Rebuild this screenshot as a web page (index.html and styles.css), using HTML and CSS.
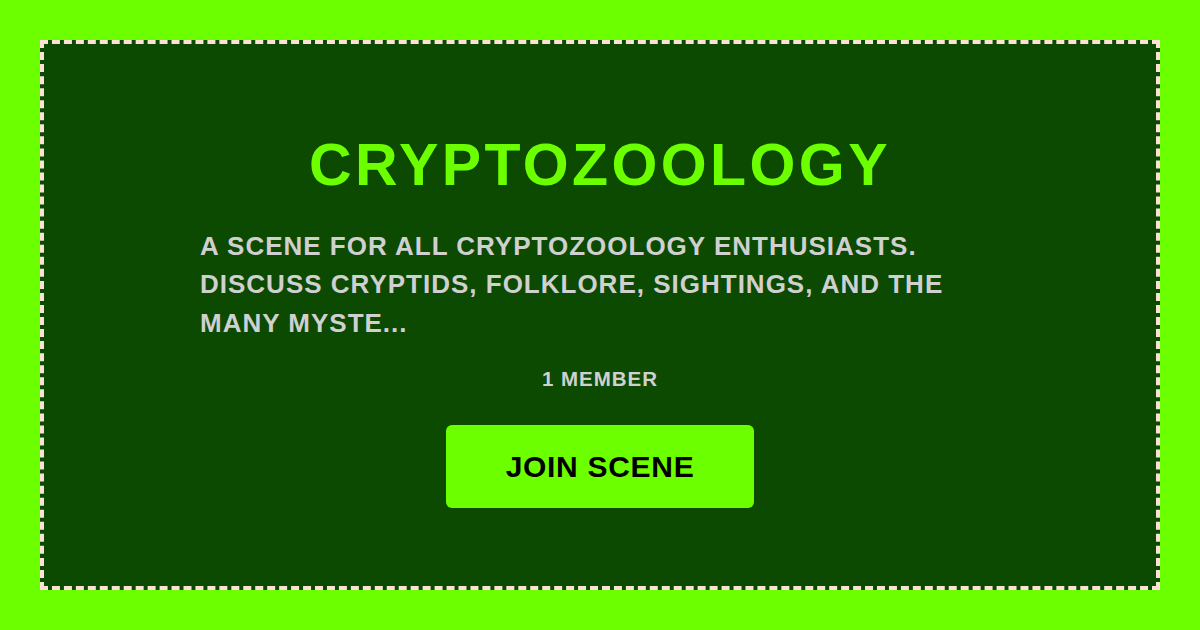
FILE: index.html
```html
<!DOCTYPE html>
<html lang="en">
<head>
    <meta charset="UTF-8">
    <meta name="viewport" content="width=device-width, initial-scale=1.0">
    <title>Cryptozoology</title>
    <link rel="stylesheet" href="styles.css">
</head>
<body>
    <div class="card">
        <h1 class="title">Cryptozoology</h1>
        <p class="description">A scene for all cryptozoology enthusiasts. Discuss cryptids, folklore, sightings, and the many myste...</p>
        <p class="members">1 member</p>
        <a class="join" href="#">Join scene</a>
    </div>
</body>
</html>
```

FILE: styles.css
```css
html, body {
    height: 100%;
}

body {
    background-color: #6cff00;
    font-family: "Liberation Sans", Arial, sans-serif;
    margin: 0;
    padding: 40px;
    box-sizing: border-box;
    display: flex;
}

.card {
    flex: 1;
    background-color: #0b4a00;
    border: 4px dashed #ffe0d8;
    padding-top: 92px;
    display: flex;
    flex-direction: column;
    align-items: center;
    text-transform: uppercase;
}

.title {
    color: #6cff00;
    font-size: 59px;
    font-weight: 700;
    letter-spacing: 3.4px;
    line-height: 1;
    margin: 0 0 32px;
}

.description {
    color: #d0d0d0;
    font-size: 26px;
    font-weight: 700;
    letter-spacing: 1px;
    line-height: 38.4px;
    width: 800px;
    margin: 0 0 27px;
}

.members {
    color: #d0d0d0;
    font-size: 20.5px;
    font-weight: 700;
    letter-spacing: 1px;
    line-height: 1;
    margin: 0 0 35px;
}

.join {
    display: block;
    width: 308px;
    height: 83px;
    line-height: 83px;
    text-align: center;
    background-color: #6cff00;
    color: #000;
    font-size: 30px;
    font-weight: 700;
    letter-spacing: 0.7px;
    text-decoration: none;
    border-radius: 6px;
}
```
